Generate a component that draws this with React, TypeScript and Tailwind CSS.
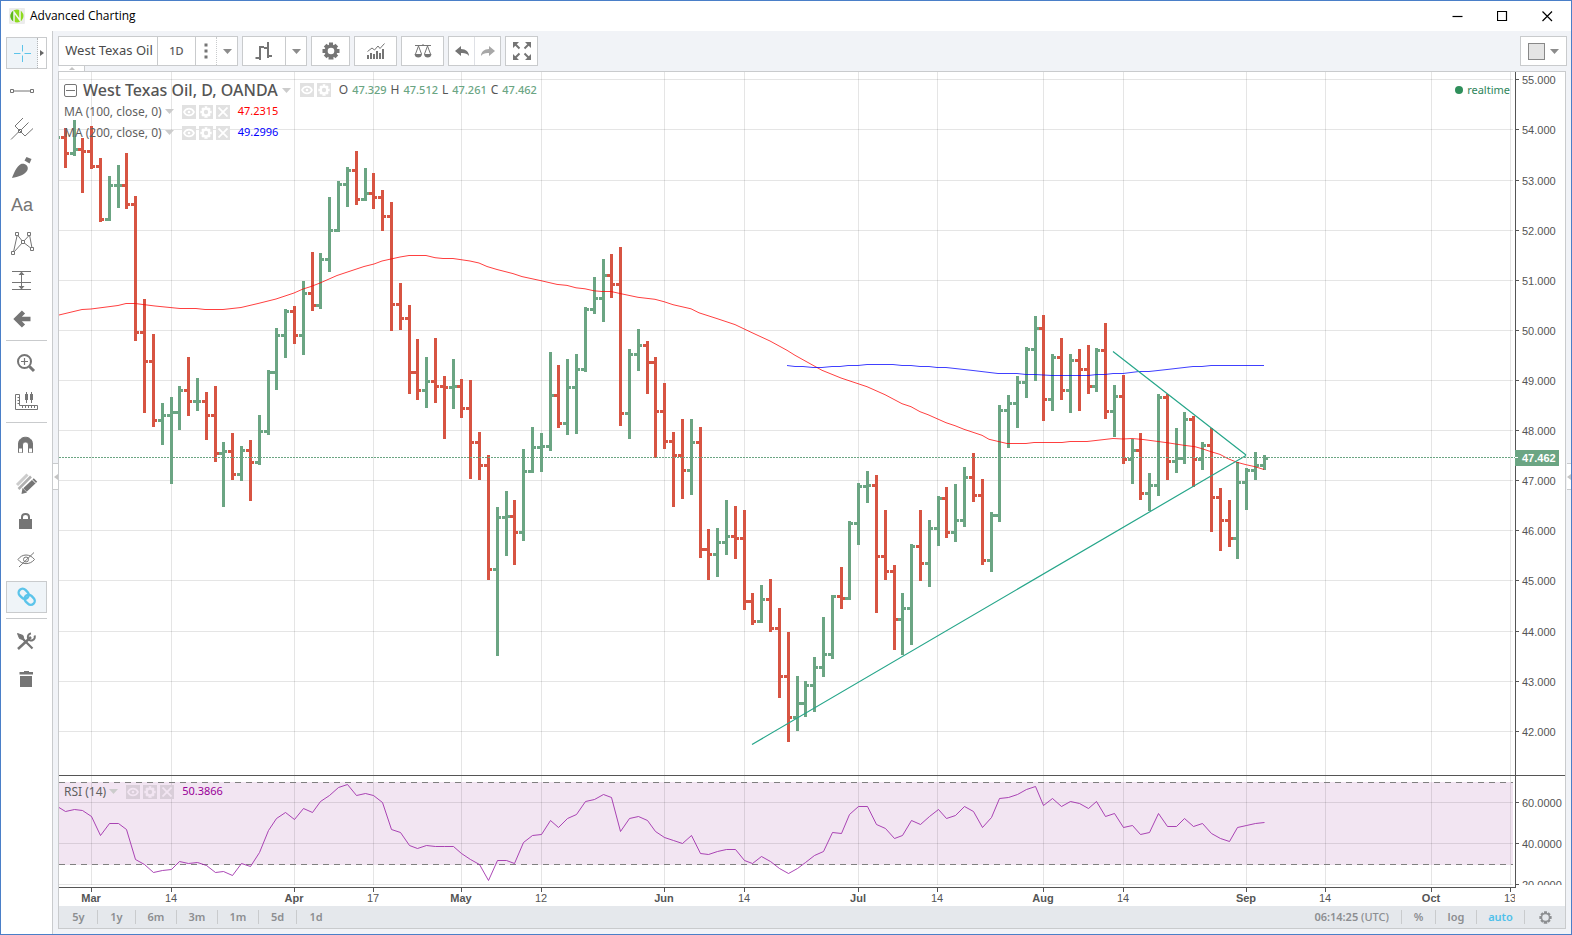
import type { ReactNode } from "react";

const FIRST_BAR_X = 91.68;
const BAR_STEP = 8.817;
const FIRST_INDEX = -3;
const barX = (i: number) => Math.floor(FIRST_BAR_X + BAR_STEP * (i + FIRST_INDEX));

// [high, low, close] on the vertical scale of the plot
const bars: [number, number, number][] = [
  [128, 168, 153], [120, 156, 149], [138, 193, 151], [126, 169, 166], [158, 222, 219], [176, 221, 185],
  [165, 208, 185], [153, 209, 204], [196, 341, 332], [299, 413, 361], [334, 427, 420], [403, 445, 415],
  [397, 484, 412], [386, 430, 390], [357, 416, 401], [378, 411, 401], [392, 440, 415], [386, 462, 453],
  [442, 507, 451], [433, 480, 474], [446, 481, 450], [440, 501, 462], [415, 465, 431], [370, 435, 372],
  [328, 390, 335], [309, 358, 311], [306, 344, 335], [281, 355, 293], [252, 311, 305], [253, 309, 259],
  [197, 272, 230], [181, 232, 184], [167, 207, 170], [151, 205, 199], [168, 201, 193], [173, 209, 197],
  [190, 231, 216], [202, 331, 304], [283, 330, 318], [305, 394, 372], [339, 400, 390], [357, 408, 381],
  [338, 403, 386], [376, 439, 387], [359, 409, 386], [379, 418, 408], [380, 479, 442], [432, 480, 465],
  [455, 580, 569], [507, 656, 517], [491, 556, 516], [500, 565, 532], [449, 541, 471], [427, 473, 447],
  [433, 472, 446], [352, 451, 395], [365, 428, 423], [359, 435, 387], [354, 434, 369], [307, 372, 309],
  [277, 314, 298], [259, 322, 275], [254, 298, 284], [247, 426, 413], [349, 439, 354], [329, 371, 345],
  [341, 394, 362], [357, 458, 411], [383, 449, 441], [432, 507, 455], [419, 499, 470], [419, 495, 442],
  [427, 558, 549], [529, 580, 554], [528, 577, 542], [500, 555, 536], [506, 559, 538], [510, 610, 601],
  [593, 625, 621], [585, 623, 599], [579, 632, 628], [608, 698, 676], [632, 742, 717], [676, 731, 703],
  [681, 717, 685], [657, 712, 667], [617, 677, 654], [595, 659, 596], [567, 609, 598], [521, 600, 523],
  [483, 545, 486], [471, 503, 485], [475, 613, 556], [510, 580, 571], [565, 650, 619], [593, 655, 608],
  [544, 645, 546], [510, 581, 563], [520, 587, 528], [496, 546, 498], [487, 538, 532], [484, 542, 520],
  [467, 527, 477], [453, 502, 495], [479, 565, 560], [512, 572, 515], [405, 522, 410], [395, 448, 403],
  [376, 428, 382], [347, 398, 349], [316, 381, 328], [315, 421, 399], [354, 411, 357], [338, 400, 390],
  [354, 413, 360], [349, 411, 369], [345, 394, 386], [348, 392, 350], [323, 419, 411], [385, 437, 396],
  [375, 464, 459], [439, 484, 450], [433, 500, 493], [473, 511, 485], [394, 496, 397], [394, 480, 461],
  [428, 473, 458], [412, 464, 419], [416, 487, 459], [442, 470, 445], [428, 532, 497], [488, 551, 520],
  [500, 547, 538], [462, 559, 482], [468, 510, 470], [452, 480, 465], [455, 470, 458],
];

const rsi = [
  811, 809, 810, 816, 835, 823, 823, 829, 859, 864, 872, 870, 869, 861, 863, 862, 865, 872, 871, 875, 863, 866,
  852, 830, 818, 812, 819, 808, 812, 801, 795, 787, 784, 795, 793, 795, 802, 829, 832, 845, 848, 845, 846, 846,
  846, 853, 859, 864, 880, 860, 860, 863, 842, 835, 834, 820, 827, 818, 814, 801, 799, 794, 797, 831, 818, 816,
  820, 831, 837, 840, 843, 835, 853, 854, 851, 849, 849, 860, 863, 856, 861, 868, 873, 868, 862, 855, 851, 832,
  833, 814, 806, 806, 824, 828, 838, 835, 820, 824, 816, 809, 818, 815, 806, 811, 827, 817, 798, 797, 794, 789,
  786, 805, 798, 806, 801, 803, 808, 801, 816, 813, 827, 825, 834, 832, 813, 826, 826, 818, 826, 823, 833, 838,
  841, 827, 825, 823, 822,
];

const ma100 =
  "59,315 82,309.5 91,309 118,305.5 126,303.5 135,303.5 155,306 180,308.5 196,308.5 205,309.5 223,309.5 241,307.5 258,303.5 276,299 294,293 303,289 311,286.5 320,283 337,275.5 364,266.5 374,264 382,261 400,257 409,255.5 426,255.5 435,257.7 443,258.5 453,258.5 470,261 479,263 487,266.5 497,269.5 513,273.6 522,276.6 541,280.7 557,284.4 567,285.4 576,287.8 585,288.8 594,290.8 602,291.5 611,291.5 620,293.5 638,297.3 655,299.3 664,301.7 673,304.7 691,308.8 699,312.8 717,318.6 735,324.6 752,332.7 770,341 787,350.3 795,355.3 822,370.3 841,378 849,380.7 867,386.7 885,394.7 902,403.7 911,406.7 920,411.7 928,414.7 946,422.7 955,425.7 964,429.3 982,435.3 989,439.3 1007,443.5 1026,443.5 1034,442.5 1062,442.5 1070,441.5 1087,441.5 1113,438.5 1123,439 1132,438.5 1143,439.5 1167,442.7 1184,445.3 1195,446.7 1202,448.7 1211,451.7 1220,454.4 1228,458.7 1237,462.3 1246,464.7 1255,466.7 1264,469.5";
const ma200 =
  "787,365.5 795,366.5 803,366.5 813,367.5 822,367.5 832,366.5 840,366.5 848,365.5 858,365.5 867,364.5 893,364.5 902,365.5 911,365.5 920,366.5 929,366.5 937,367.5 946,367.5 973,370.5 998,373.5 1017,373.5 1026,374.5 1035,374.5 1052,375.5 1088,375.5 1097,374.5 1105,374.5 1113,373.5 1123,373.5 1139,371.5 1149,371.5 1167,369.5 1193,366.5 1202,366.5 1211,365.5 1264,365.5";

const priceRows: [number, string][] = [
  [79, "55.000"], [129, "54.000"], [180, "53.000"], [230, "52.000"], [280, "51.000"], [330, "50.000"],
  [380, "49.000"], [430, "48.000"], [480, "47.000"], [530, "46.000"], [580, "45.000"], [631, "44.000"],
  [681, "43.000"], [731, "42.000"],
];
const rsiRows: [number, string][] = [[802, "60.0000"], [843, "40.0000"], [884, "20.0000"]];
const dates: [number, string, boolean][] = [
  [91, "Mar", true], [171, "14", false], [294, "Apr", true], [373, "17", false], [461, "May", true],
  [541, "12", false], [664, "Jun", true], [744, "14", false], [858, "Jul", true], [937, "14", false],
  [1043, "Aug", true], [1123, "14", false], [1246, "Sep", true], [1325, "14", false], [1431, "Oct", true],
  [1510, "13", false],
];

function Plot() {
  const rsiPoints = "59,807.5 " + rsi.map((y, i) => `${barX(i) + 0.5},${y + 0.5}`).join(" ");
  return (
    <svg className="block h-full w-full" aria-label="West Texas Oil daily price chart" role="img">
      <g transform="translate(-59 -72)">
        <rect x="59" y="782" width="1454" height="83" fill="#f2e5f2" />
        <g shapeRendering="crispEdges" stroke="#000000" strokeOpacity="0.1">
          {priceRows.map(([y]) => (
            <line key={y} x1="59" x2="1513" y1={y + 0.5} y2={y + 0.5} />
          ))}
          {rsiRows.map(([y]) => (
            <line key={y} x1="59" x2="1513" y1={y + 0.5} y2={y + 0.5} />
          ))}
          {dates.map(([x]) => (
            <line key={x} x1={x + 0.5} x2={x + 0.5} y1="72" y2="885" />
          ))}
        </g>
        <g shapeRendering="crispEdges">
          {bars.map(([high, low, close], i) => {
            const open = i === 0 ? 137 : bars[i - 1][2];
            const x = barX(i);
            return (
              <g key={i} fill={close <= open ? "#6ba583" : "#d75442"}>
                <rect x={x - 1} y={high} width="3" height={low - high} />
                <rect x={x - 4} y={open - 1} width="3" height="3" />
                <rect x={x + 2} y={close - 1} width="2" height="3" />
              </g>
            );
          })}
          <rect x="59" y="136" width="1" height="3" fill="#6ba583" />
        </g>
        <polyline points={ma100} fill="none" stroke="#ff0000" strokeOpacity="0.75" />
        <polyline points={ma200} fill="none" stroke="#0000ff" strokeOpacity="0.75" />
        <path d="M752 744.5L1246 455.5M1113 351.5L1246 455" fill="none" stroke="#26a68a" strokeWidth="1.2" />
        <g shapeRendering="crispEdges">
          <line x1="59" x2="1515" y1="457.5" y2="457.5" stroke="#6ba583" strokeDasharray="2 1" />
          <line x1="59" x2="1515" y1="775.5" y2="775.5" stroke="#555555" />
          <path d="M59 782.5H1513M59 864.5H1513" stroke="#808080" strokeDasharray="6 5" />
          <line x1="59" x2="1515" y1="887.5" y2="887.5" stroke="#555555" />
          {dates.map(([x]) => (
            <line key={x} x1={x + 0.5} x2={x + 0.5} y1="888" y2="892" stroke="#555555" />
          ))}
        </g>
        <polyline points={rsiPoints} fill="none" stroke="#9c27a8" strokeOpacity="0.85" />
        <g className="text-[11px]" fill="#555555" textAnchor="middle">
          {dates.map(([x, label, month]) => (
            <text key={x} x={x} y="902" fontWeight={month ? 700 : 400}>{label}</text>
          ))}
        </g>
      </g>
    </svg>
  );
}

function PriceScale() {
  return (
    <svg className="block h-full w-full text-[11px]" aria-label="Price scale" role="img">
      <g transform="translate(-1515 -72)">
        <g shapeRendering="crispEdges" stroke="#555555">
          <line x1="1515.5" x2="1515.5" y1="72" y2="888" />
          <line x1="1515" x2="1565" y1="775.5" y2="775.5" />
          {[...priceRows, ...rsiRows].map(([y]) => (
            <line key={y} x1="1515" x2="1519" y1={y + 0.5} y2={y + 0.5} />
          ))}
        </g>
        <clipPath id="scale-clip">
          <rect x="1515" y="72" width="60" height="813" />
        </clipPath>
        <g fill="#555555" clipPath="url(#scale-clip)">
          {[...priceRows, ...rsiRows].map(([y, label]) => (
            <text key={y} x="1522" y={y + 5}>{label}</text>
          ))}
        </g>
        <rect x="1515" y="450" width="44" height="16" fill="#6ba583" shapeRendering="crispEdges" />
        <line x1="1515" x2="1518" y1="457.5" y2="457.5" stroke="#ffffff" />
        <text x="1522" y="462" fill="#ffffff" fontWeight="700">47.462</text>
      </g>
    </svg>
  );
}

function Gear({ size, hole = "#ffffff", bore = 3.3 }: { size: number; hole?: string; bore?: number }) {
  return (
    <svg width={size} height={size} viewBox="-9 -9 18 18" fill="currentColor" aria-hidden="true">
      <path d="M-2-8.500H2L2.500 8.500H-2.500Z" />
      <path d="M-8.500-2H8.500V2H-8.500Z" />
      <path d="M-2-8.200H2V8.200H-2Z" transform="rotate(45)" />
      <path d="M-2-8.200H2V8.200H-2Z" transform="rotate(-45)" />
      <circle r="6.500" />
      <circle r={bore} fill={hole} />
    </svg>
  );
}

function Caret({ className = "text-[#8c8c8c]" }: { className?: string }) {
  return (
    <svg width="9" height="5" viewBox="0 0 9 5" className={className} aria-hidden="true">
      <path d="M0 0H9L4.500 5Z" fill="currentColor" />
    </svg>
  );
}

function Mini({ kind, rsiPane = false }: { kind: "eye" | "gear" | "x"; rsiPane?: boolean }) {
  const names = { eye: "Hide", gear: "Format", x: "Remove" };
  const hole = rsiPane ? "#d9ced9" : "#e1e1e1";
  return (
    <button
      aria-label={names[kind]}
      className={`flex h-[14px] w-[14px] items-center justify-center ${rsiPane ? "bg-[#d9ced9] text-[#f2e5f2]" : "bg-[#e1e1e1] text-white"}`}
    >
      {kind === "gear" && <Gear size={12} hole={hole} />}
      {kind === "x" && (
        <svg width="10" height="10" viewBox="0 0 10 10" stroke="currentColor" strokeWidth="1.800" aria-hidden="true">
          <path d="M0.500 0.500L9.500 9.500M9.500 0.500L0.500 9.500" />
        </svg>
      )}
      {kind === "eye" && (
        <svg width="12" height="10" viewBox="0 0 12 10" fill="none" stroke="currentColor" strokeWidth="1.800" aria-hidden="true">
          <path d="M1 5C3 0.500 9 0.500 11 5C9 9.500 3 9.500 1 5Z" />
          <circle cx="6" cy="5" r="1.300" fill="currentColor" stroke="none" />
        </svg>
      )}
    </button>
  );
}

function Study({ name, value, tone, rsiPane }: { name: string; value: string; tone: string; rsiPane?: boolean }) {
  return (
    <div className="flex h-[21px] items-center">
      <span className="text-[12px] text-[#5f5f5f]">{name}</span>
      <Caret className="ml-[3px] text-[#cccccc]" />
      <div className="ml-2 flex gap-[3px]">
        <Mini kind="eye" rsiPane={rsiPane} />
        <Mini kind="gear" rsiPane={rsiPane} />
        <Mini kind="x" rsiPane={rsiPane} />
      </div>
      <span className={`ml-2 text-[11px] ${tone}`}>{value}</span>
    </div>
  );
}

function Group({ className, children }: { className: string; children: ReactNode }) {
  return <div className={`flex h-[30px] border border-[#c9cbcd] bg-white text-[#757575] ${className}`}>{children}</div>;
}

function Cell({ label, className, children }: { label: string; className: string; children: ReactNode }) {
  return (
    <button aria-label={label} className={`flex items-center justify-center ${className}`}>
      {children}
    </button>
  );
}

function Toolbar() {
  return (
    <div className="flex h-[35px] items-end gap-1">
      <Group className="w-[180px]">
        <button className="w-[99px] border-r border-[#c9cbcd] pl-[2px] text-[13px] whitespace-nowrap text-[#4a4a4a]">West Texas Oil</button>
        <button className="w-[38px] border-r border-[#c9cbcd] text-[11px] font-medium text-[#5a5a5a]">1D</button>
        <Cell label="More intervals" className="w-[21px] border-r border-dotted border-[#c9cbcd]">
          <svg width="4" height="16" viewBox="0 0 4 16" fill="currentColor" aria-hidden="true">
            <path d="M0.500 0.500h3v3h-3zM0.500 6.500h3v3h-3zM0.500 12.500h3v3h-3z" />
          </svg>
        </Cell>
        <Cell label="Interval list" className="flex-1"><Caret /></Cell>
      </Group>
      <Group className="w-[65px]">
        <Cell label="Bar style" className="w-[43px] border-r border-[#c9cbcd]">
          <svg width="18" height="18" viewBox="0 0 18 18" fill="none" stroke="currentColor" strokeWidth="2" aria-hidden="true">
            <path d="M5 4V18M0.500 16H5M5 5H9M13 0V16M9 6H13M13 14H17" />
          </svg>
        </Cell>
        <Cell label="Bar style list" className="flex-1"><Caret /></Cell>
      </Group>
      <Group className="w-[39px]">
        <Cell label="Properties" className="flex-1"><Gear size={18} /></Cell>
      </Group>
      <Group className="w-[43px]">
        <Cell label="Indicators" className="flex-1">
          <svg width="18" height="16" viewBox="0 0 18 16" aria-hidden="true">
            <path d="M0 12h2v4H0zM3 10h2v6H3zM6 11h2v5H6zM9 8h2v8H9zM12 10h2v6h-2zM15 6h2v10h-2z" fill="currentColor" />
            <path d="M0.500 8.500L5 5L7.500 7L11 3L13 5.500L17.500 0.500" fill="none" stroke="currentColor" />
          </svg>
        </Cell>
      </Group>
      <Group className="w-[43px]">
        <Cell label="Compare" className="flex-1">
          <svg width="18" height="14" viewBox="0 0 18 14" fill="none" stroke="currentColor" aria-hidden="true">
            <path d="M1 1.500H17M9 0V2M4.500 2L1.500 10M4.500 2L7.500 10M13.500 2L10.500 10M13.500 2L16.500 10" />
            <path d="M0.500 10H8Q7.500 13.500 4.300 13.500Q1 13.500 0.500 10ZM10 10H17.500Q17 13.500 13.700 13.500Q10.500 13.500 10 10Z" fill="currentColor" stroke="none" />
          </svg>
        </Cell>
      </Group>
      <Group className="w-[53px]">
        <Cell label="Undo" className="w-[26px] border-r border-[#dfe1e6]">
          <svg width="14" height="10" viewBox="0 0 14 10" aria-hidden="true">
            <path d="M0 5L6 0V3C11 3 14 6 14 10C12 7.500 10 6.800 6 7V10Z" fill="currentColor" />
          </svg>
        </Cell>
        <Cell label="Redo" className="flex-1 text-[#a8a8a8]">
          <svg width="14" height="10" viewBox="0 0 14 10" aria-hidden="true">
            <path d="M14 5L8 0V3C3 3 0 6 0 10C2 7.500 4 6.800 8 7V10Z" fill="currentColor" />
          </svg>
        </Cell>
      </Group>
      <Group className="w-[33px]">
        <Cell label="Full screen" className="flex-1">
          <svg width="18" height="18" viewBox="0 0 18 18" aria-hidden="true">
            <path d="M0 0H6L0 6ZM18 0V6L12 0ZM0 18V12L6 18ZM18 18H12L18 12Z" fill="currentColor" />
            <path d="M2 2L6.500 6.500M16 2L11.500 6.500M2 16L6.500 11.500M16 16L11.500 11.500" stroke="currentColor" strokeWidth="2" />
          </svg>
        </Cell>
      </Group>
      <button aria-label="Layout" className="ml-auto flex h-[30px] w-[47px] items-center justify-center gap-[5px] border border-[#c9cbcd] bg-white">
        <span className="h-[17px] w-[17px] border border-[#888888] bg-[#e4e4e4]" />
        <Caret />
      </button>
    </div>
  );
}

function Tool({ label, children }: { label: string; children: ReactNode }) {
  return (
    <button aria-label={label} className="block h-[38px] w-[41px] text-[#757575]">
      <svg width="41" height="38" viewBox="0 0 41 38" fill="none" stroke="currentColor" aria-hidden="true">
        {children}
      </svg>
    </button>
  );
}

function Divider() {
  return <div className="mt-[2px] mb-[3px] h-px w-[41px] bg-[#c9cbcd]" />;
}

function Sidebar() {
  return (
    <nav aria-label="Drawing tools" className="w-[51px] shrink-0 bg-white pt-[3px] pl-[5px]">
      <div className="flex h-[38px] items-center">
        <div className="flex h-[32px] w-[41px] border border-[#c9cbcd]">
          <button aria-label="Cross" className="flex flex-1 items-center justify-center border-r border-dotted border-[#b4b6b8] bg-[#eff4f8] text-[#5cc4ea]">
            <svg width="17" height="17" viewBox="0 0 17 17" stroke="currentColor" aria-hidden="true">
              <path d="M8.500 0V6.500M8.500 10.500V17M0 8.500H6.500M10.500 8.500H17" />
            </svg>
          </button>
          <button aria-label="Cursor list" className="flex w-[8px] items-center justify-center">
            <svg width="4" height="6" viewBox="0 0 4 6" aria-hidden="true"><path d="M0 0L4 3L0 6Z" fill="#666666" /></svg>
          </button>
        </div>
      </div>
      <Tool label="Trend line">
        <path d="M4.500 17.500h3v3h-3zM24.500 17.500h3v3h-3zM7.500 19H24.500" />
      </Tool>
      <Tool label="Pitchfork">
        <path d="M5 29.500L12.500 22M12.500 19.500h3v3h-3zM17 8L9 16L19 26L27 18.500M15.500 19.500L22.500 12.500" />
      </Tool>
      <Tool label="Brush">
        <path d="M6 30C8 25 10 19 15 16C19 15 23 18 21.500 22C19 27 12 29 6 30Z" fill="currentColor" stroke="none" />
        <path d="M20.500 9L25.500 11L23.500 15.500L18.500 12.500Z" fill="currentColor" stroke="none" />
      </Tool>
      <button aria-label="Text" className="block h-[38px] w-[32px] text-center font-['Liberation_Sans',Arial,sans-serif] text-[18px] text-[#757575]">Aa</button>
      <Tool label="Patterns">
        <path d="M7.500 28L11 12M11.500 11L17 18L23.500 11M23.500 11L26 24M26 25L17 18L8 28" />
        <path d="M9.500 8.500h3v3h-3zM21.500 8.500h3v3h-3zM15.500 16.500h3v3h-3zM5.500 27.500h3v3h-3zM24.500 23.500h3v3h-3z" fill="#ffffff" />
      </Tool>
      <Tool label="Prediction">
        <path d="M6 9.500H25M6 20.500H25M6 27.500H25M15.500 10V27" />
        <path d="M15.500 9.500L18.500 13H12.500ZM15.500 27.500L18.500 24H12.500Z" fill="currentColor" stroke="none" />
      </Tool>
      <Tool label="Arrow">
        <path d="M17.500 12L10.500 19L17.500 26M11 19H24.500" strokeWidth="4.500" />
      </Tool>
      <Divider />
      <Tool label="Zoom in">
        <circle cx="18.500" cy="17.500" r="6.500" strokeWidth="2" />
        <path d="M15 17.500H22M18.500 14V21" strokeWidth="1.200" />
        <path d="M23.500 22.500L28 27" strokeWidth="3" />
      </Tool>
      <Tool label="Measure">
        <path d="M9.500 12.500H13.500V23.500H31.500V27.500H9.500ZM11.500 15.500H13M11.500 18.500H13M11.500 21.500H13M16.500 24V26M19.500 24V26M22.500 24V26M25.500 24V26M28.500 24V26M20.500 10V21M25.500 10V21" />
        <path d="M19 12h3v6h-3zM24 12h3v6h-3z" fill="currentColor" stroke="none" />
      </Tool>
      <Divider />
      <Tool label="Magnet">
        <path d="M12.500 26.500V18C12.500 9 26.500 9 26.500 18V26.500H22.500V19C22.500 15 16.500 15 16.500 19V26.500Z" fill="currentColor" />
        <path d="M13 22.500h3v4h-3zM23 22.500h3v4h-3z" fill="#ffffff" stroke="none" />
      </Tool>
      <Tool label="Stay in drawing mode">
        <path d="M11 21L21.500 10.500" stroke="#cccccc" strokeWidth="3" />
        <path d="M12.500 25L25 12.500" stroke="#b0b0b0" strokeWidth="2.500" />
        <path d="M19 26L29.500 16" strokeWidth="5" />
        <path d="M16.500 24L21 28.500L15.500 30Z" fill="currentColor" stroke="none" />
        <path d="M25.500 15L30 19.500" stroke="#ffffff" />
      </Tool>
      <Tool label="Lock all drawings">
        <path d="M13 17h13v10H13z" fill="currentColor" stroke="none" />
        <path d="M16 18V15C16 11 23 11 23 15V18" strokeWidth="2" />
      </Tool>
      <Tool label="Hide all drawings">
        <path d="M12 19.500C16 13.500 24 13.500 28.500 19.500C24 25 16 25 12 19.500ZM13 27L28 12.500" />
        <circle cx="20" cy="19.500" r="2.500" />
      </Tool>
      <div className="flex h-[38px] items-center">
        <button aria-label="Link drawings" className="flex h-[32px] w-[41px] items-center justify-center border border-[#c9cbcd] bg-[#eff4f8] text-[#5cc4ea]">
          <svg width="20" height="20" viewBox="0 0 20 20" fill="none" stroke="currentColor" strokeWidth="2.400" aria-hidden="true">
            <rect x="1.200" y="2.800" width="11" height="8" rx="4" transform="rotate(45 6.700 6.800)" />
            <rect x="7.200" y="8.800" width="11" height="8" rx="4" transform="rotate(45 12.700 12.800)" />
          </svg>
        </button>
      </div>
      <Divider />
      <Tool label="Settings">
        <path d="M12 27L25 15" strokeWidth="2.500" />
        <path d="M28.500 13.500A3.500 3.500 0 1 1 25 11.500" strokeWidth="2" />
        <path d="M17 17L26.500 26.500" strokeWidth="2.200" />
        <path d="M11.500 11.500L17 13.500L18 18L13.500 16.500Z" fill="currentColor" />
      </Tool>
      <Tool label="Remove drawings">
        <path d="M14 16h12v11H14zM13.500 12H18V11H23V12H27V14.500H13.500Z" fill="currentColor" stroke="none" />
      </Tool>
    </nav>
  );
}

function TitleBar() {
  return (
    <header className="flex h-[30px] shrink-0 items-center bg-white pl-2">
      <svg width="16" height="16" viewBox="0 0 16 16" aria-hidden="true">
        <rect width="16" height="16" rx="1" fill="#ececec" />
        <circle cx="8" cy="8" r="6.500" fill="#8edb1e" />
        <path d="M1.500 7A6.500 6.500 0 0 1 5 2.200V13.800A6.500 6.500 0 0 1 1.500 7Z" fill="#5cb81c" />
        <path d="M5 15V4L11 12.500V1" fill="none" stroke="#f4f4f4" strokeWidth="1.500" />
      </svg>
      <h1 className="ml-[5px] font-['Open_Sans',sans-serif] text-[12px] text-black">Advanced Charting</h1>
      <div className="ml-auto flex h-full pr-px text-black">
        {[
          ["Minimize", "M0.500 5.500H10.500"],
          ["Maximize", "M0.500 0.500H9.500V9.500H0.500Z"],
          ["Close", "M0.500 0.500L10 10M10 0.500L0.500 10"],
        ].map(([name, d]) => (
          <button key={name} aria-label={name} className="flex w-[45px] items-center justify-center">
            <svg width="11" height="11" viewBox="0 0 11 11" fill="none" stroke="currentColor" strokeWidth="1.200" aria-hidden="true">
              <path d={d} />
            </svg>
          </button>
        ))}
      </div>
    </header>
  );
}

const ranges = ["5y", "1y", "6m", "3m", "1m", "5d", "1d"];

function BottomBar() {
  return (
    <footer className="flex h-[22px] shrink-0 items-center bg-[#e5e8ec] pl-px text-[11px] font-semibold text-[#8c8e91]">
      {ranges.map((r) => (
        <button
          key={r}
          className={`h-[14px] border-[#c9cbcd] leading-[14px] ${r.endsWith("m") ? "w-[41px]" : "w-[38px]"} ${r === "1d" ? "" : "border-r"}`}
        >
          {r}
        </button>
      ))}
      <div className="ml-auto flex h-[14px] items-center leading-[14px]">
        <span className="border-r border-[#c9cbcd] pr-3">06:14:25 <span className="font-medium">(UTC)</span></span>
        <button className="w-[34px] border-r border-[#c9cbcd]">%</button>
        <button className="w-[41px] border-r border-[#c9cbcd]">log</button>
        <button className="w-[48px] border-r border-[#c9cbcd] text-[#4fc0ea]">auto</button>
        <button aria-label="Chart settings" className="flex w-[40px] justify-center"><Gear size={13} hole="#e5e8ec" bore={4.5} /></button>
      </div>
    </footer>
  );
}

function Legend() {
  const values = [["O", "47.329"], ["H", "47.512"], ["L", "47.261"], ["C", "47.462"]];
  return (
    <div className="absolute top-[7px] left-[5px] whitespace-nowrap">
      <div className="flex h-[22px] items-center">
        <button aria-label="Collapse" className="flex h-[13px] w-[13px] items-center justify-center rounded-[2px] border border-[#757575]">
          <span className="h-px w-[9px] bg-[#757575]" />
        </button>
        <h2 className="ml-[6px] text-[16px] font-medium text-[#555555]">West Texas Oil, D, OANDA</h2>
        <Caret className="ml-1 text-[#cccccc]" />
        <div className="ml-[9px] flex gap-[3px]">
          <Mini kind="eye" />
          <Mini kind="gear" />
        </div>
        <div className="ml-2 flex items-center gap-1 text-[11px]">
          {values.map(([k, v]) => (
            <span key={k} className="flex items-center gap-1 text-[#555555]">
              <span className="text-[12px]">{k}</span>
              <span className="font-medium text-[#6ba583]">{v}</span>
            </span>
          ))}
        </div>
      </div>
      <Study name="MA (100, close, 0)" value="47.2315" tone="text-[#ff0000]" />
      <Study name="MA (200, close, 0)" value="49.2996" tone="text-[#0000ff]" />
    </div>
  );
}

function Handle() {
  return (
    <button aria-label="Toggle panel" className="flex h-[27px] w-full items-center justify-end border-y border-[#c9cbcd] bg-white">
      <svg width="4" height="6" viewBox="0 0 4 6" aria-hidden="true"><path d="M4 0L0 3L4 6Z" fill="#c4c4c4" /></svg>
    </button>
  );
}

export default function App() {
  return (
    <div className="flex h-screen flex-col border border-[#4a7fc8] bg-[#f1f3f7] font-['Noto_Sans',sans-serif]">
      <TitleBar />
      <main className="flex min-h-0 flex-1">
        <Sidebar />
        <div className="flex w-[6px] shrink-0 flex-col border-l border-[#c9cbcd] pt-[432px]">
          <Handle />
        </div>
        <div className="flex min-w-0 flex-1 flex-col pb-[5px]">
          <Toolbar />
          <button aria-label="Hide toolbar" className="ml-px flex h-[5px] w-[26px] items-center justify-center border-r border-[#c9cbcd] bg-white">
            <svg width="6" height="3" viewBox="0 0 6 3" aria-hidden="true"><path d="M3 0L6 3H0Z" fill="#c4c4c4" /></svg>
          </button>
          <div className="mr-px flex min-h-0 flex-1 flex-col border border-[#c9cbcd] bg-white font-['Liberation_Sans',Arial,sans-serif]">
            <div className="flex min-h-0 flex-1">
              <div className="relative min-w-0 flex-1">
                <Plot />
                <div className="font-['Noto_Sans',sans-serif]">
                  <Legend />
                  <div className="absolute top-[709px] left-[5px]">
                    <Study name="RSI (14)" value="50.3866" tone="text-[#990099]" rsiPane />
                  </div>
                  <div className="absolute top-[10px] right-[5px] flex items-center gap-1 text-[11px] text-[#2f855a]">
                    <span className="h-2 w-2 rounded-full bg-[#2f8f5b]" />
                    realtime
                  </div>
                </div>
              </div>
              <div className="w-[50px] shrink-0">
                <PriceScale />
              </div>
            </div>
            <div className="font-['Noto_Sans',sans-serif]">
              <BottomBar />
            </div>
          </div>
        </div>
        <div className="flex w-[4px] shrink-0 flex-col pt-[432px]">
          <Handle />
        </div>
      </main>
    </div>
  );
}
